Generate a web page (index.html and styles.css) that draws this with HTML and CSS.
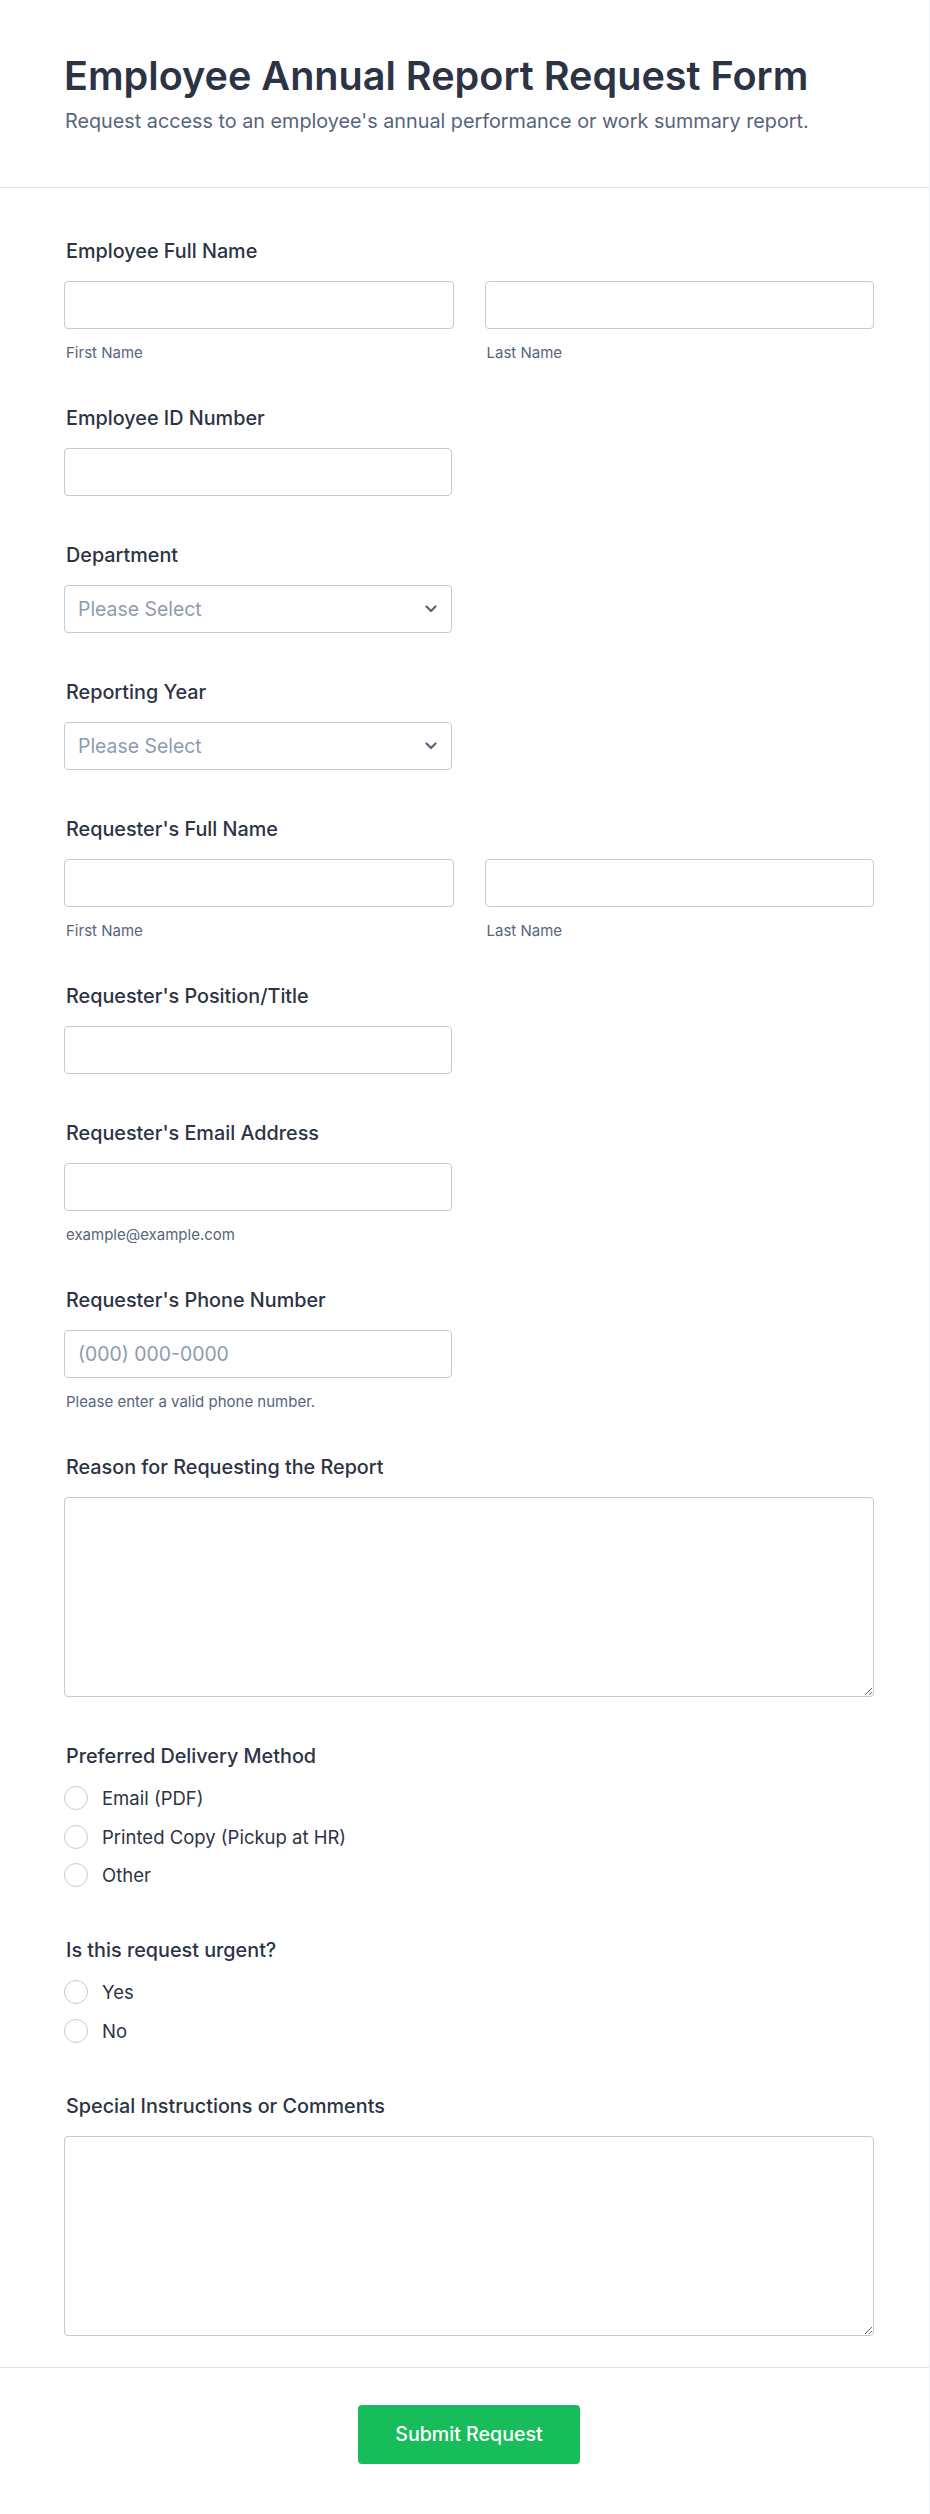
FILE: index.html
```html
<!DOCTYPE html>
<html lang="en">
<head>
<meta charset="utf-8">
<title>Employee Annual Report Request Form</title>
<link rel="stylesheet" href="styles.css">
</head>
<body>
<div class="page">
  <header class="form-header">
    <h1 class="form-title">Employee Annual Report Request Form</h1>
    <p class="form-subtitle">Request access to an employee's annual performance or work summary report.</p>
  </header>

  <form class="form-body">
    <div class="field">
      <label class="field-label">Employee Full Name</label>
      <div class="name-row">
        <div class="name-col">
          <input class="text-input" type="text">
          <span class="sublabel">First Name</span>
        </div>
        <div class="name-col">
          <input class="text-input" type="text">
          <span class="sublabel">Last Name</span>
        </div>
      </div>
    </div>

    <div class="field">
      <label class="field-label">Employee ID Number</label>
      <input class="text-input half" type="text">
    </div>

    <div class="field">
      <label class="field-label">Department</label>
      <div class="select half">
        <span class="select-placeholder">Please Select</span>
        <svg class="chevron" width="12" height="8" viewBox="0 0 12 8"><path d="M1.5 1.5l4.5 4.5 4.5-4.5" fill="none" stroke="#57647e" stroke-width="2.2" stroke-linecap="round" stroke-linejoin="round"/></svg>
      </div>
    </div>

    <div class="field">
      <label class="field-label">Reporting Year</label>
      <div class="select half">
        <span class="select-placeholder">Please Select</span>
        <svg class="chevron" width="12" height="8" viewBox="0 0 12 8"><path d="M1.5 1.5l4.5 4.5 4.5-4.5" fill="none" stroke="#57647e" stroke-width="2.2" stroke-linecap="round" stroke-linejoin="round"/></svg>
      </div>
    </div>

    <div class="field">
      <label class="field-label">Requester's Full Name</label>
      <div class="name-row">
        <div class="name-col">
          <input class="text-input" type="text">
          <span class="sublabel">First Name</span>
        </div>
        <div class="name-col">
          <input class="text-input" type="text">
          <span class="sublabel">Last Name</span>
        </div>
      </div>
    </div>

    <div class="field">
      <label class="field-label">Requester's Position/Title</label>
      <input class="text-input half" type="text">
    </div>

    <div class="field">
      <label class="field-label">Requester's Email Address</label>
      <input class="text-input half" type="text">
      <span class="sublabel">example@example.com</span>
    </div>

    <div class="field">
      <label class="field-label">Requester's Phone Number</label>
      <input class="text-input half" type="text" placeholder="(000) 000-0000">
      <span class="sublabel">Please enter a valid phone number.</span>
    </div>

    <div class="field">
      <label class="field-label">Reason for Requesting the Report</label>
      <textarea class="text-area"></textarea>
    </div>

    <div class="field">
      <label class="field-label">Preferred Delivery Method</label>
      <div class="options">
        <label class="option"><span class="radio"></span>Email (PDF)</label>
        <label class="option"><span class="radio"></span>Printed Copy (Pickup at HR)</label>
        <label class="option"><span class="radio"></span>Other</label>
      </div>
    </div>

    <div class="field">
      <label class="field-label">Is this request urgent?</label>
      <div class="options">
        <label class="option"><span class="radio"></span>Yes</label>
        <label class="option"><span class="radio"></span>No</label>
      </div>
    </div>

    <div class="field">
      <label class="field-label">Special Instructions or Comments</label>
      <textarea class="text-area"></textarea>
    </div>
  </form>

  <footer class="form-footer">
    <button class="submit-btn" type="button">Submit Request</button>
  </footer>
</div>
</body>
</html>
```

FILE: styles.css
```css
* {
  box-sizing: border-box;
}

html, body {
  margin: 0;
  padding: 0;
  background: #ffffff;
}

body {
  font-family: Inter, "Noto Sans", "Liberation Sans", sans-serif;
  color: #2c3345;
}

.page {
  width: 930px;
  min-height: 2514px;
  border-right: 1px solid #f1f2f6;
}

.form-header {
  padding: 52px 56px 52px 64px;
  border-bottom: 1px solid #dfe2ea;
}

.form-title {
  margin: 0;
  font-size: 39.6px;
  line-height: 48px;
  font-weight: 600;
  color: #2c3345;
}

.form-subtitle {
  margin: 7px 0 0;
  padding-left: 1px;
  font-size: 19.8px;
  line-height: 28px;
  color: #57647e;
}

.form-body {
  padding: 49px 55px 31px 64px;
  display: flex;
  flex-direction: column;
  gap: 45px;
}

.field {
  display: flex;
  flex-direction: column;
  align-items: flex-start;
}

.field-label {
  padding-left: 2px;
  font-size: 19.8px;
  line-height: 28px;
  font-weight: 500;
  color: #2c3345;
  margin-bottom: 16px;
}

.name-row {
  display: grid;
  grid-template-columns: 1fr 1fr;
  column-gap: 31px;
  width: 100%;
}

.name-col {
  display: flex;
  flex-direction: column;
}

.text-input {
  width: 100%;
  height: 48px;
  border: 1px solid #c3cad8;
  border-radius: 4px;
  padding: 0 13px;
  font-family: inherit;
  font-size: 19.4px;
  color: #2c3345;
  background: #fff;
  outline: none;
}

.text-input::placeholder {
  color: #8f9ab0;
}

.half {
  width: 388px;
}

.sublabel {
  padding-left: 2px;
  margin-top: 15px;
  margin-bottom: -3px;
  font-size: 15px;
  line-height: 18px;
  color: #57647e;
}

.select {
  height: 48px;
  border: 1px solid #c3cad8;
  border-radius: 4px;
  padding: 0 14px 0 13px;
  display: flex;
  align-items: center;
  justify-content: space-between;
  background: #fff;
}

.select-placeholder {
  font-size: 19.4px;
  color: #8f9ab0;
}

.chevron {
  display: block;
}

.text-area {
  width: 100%;
  height: 200px;
  border: 1px solid #c3cad8;
  border-radius: 4px;
  resize: vertical;
  font-family: inherit;
  font-size: 18px;
  padding: 10px 14px;
  background: #fff;
  outline: none;
}

.options {
  display: flex;
  flex-direction: column;
  margin: -7px 0 -3.5px;
}

.option {
  height: 38.5px;
  display: flex;
  align-items: center;
  gap: 14px;
  font-size: 18.5px;
  color: #2c3345;
}

.radio {
  width: 24px;
  height: 24px;
  border: 1px solid #c3cad8;
  border-radius: 50%;
  background: #fff;
  flex: none;
}

.form-footer {
  border-top: 1px solid #dfe2ea;
  padding: 37px 55px 50px 64px;
  display: flex;
  justify-content: center;
}

.submit-btn {
  width: 222px;
  height: 59px;
  padding: 0;
  background: #18bd5b;
  border: none;
  border-radius: 4px;
  color: #ffffff;
  font-family: inherit;
  font-size: 19.6px;
  font-weight: 500;
  cursor: pointer;
}
```
